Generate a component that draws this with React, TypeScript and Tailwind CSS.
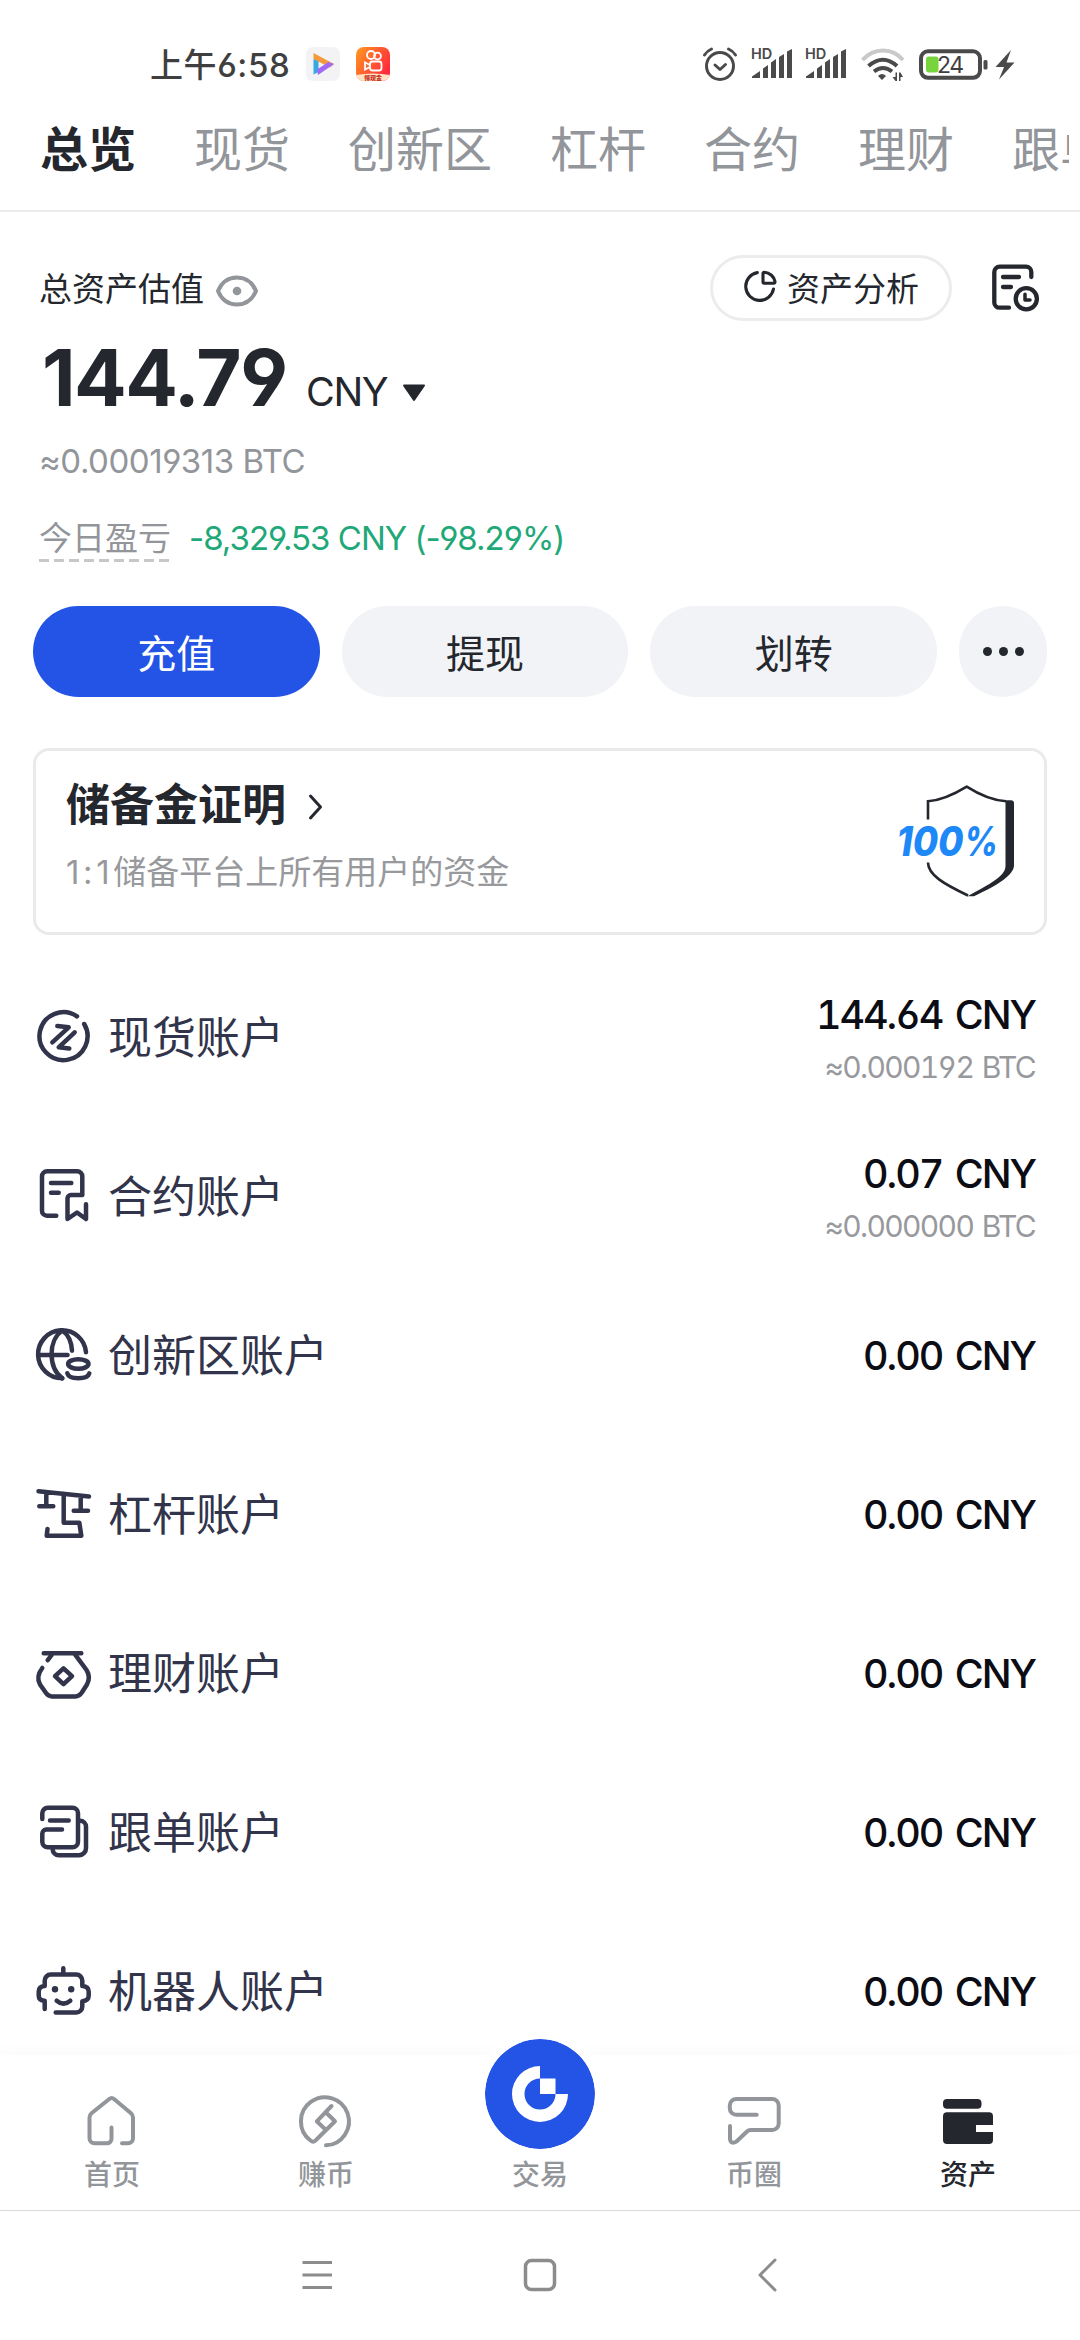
import type { ReactNode } from "react";

const tabs = ["总览", "现货", "创新区", "杠杆", "合约", "理财", "跟单"];

function Stroke({ size = 54, width = 4.5, className = "", children }: { size?: number; width?: number; className?: string; children: ReactNode }) {
  return (
    <svg
      width={size}
      height={size}
      viewBox={`0 0 ${size} ${size}`}
      fill="none"
      stroke="currentColor"
      strokeWidth={width}
      strokeLinecap="round"
      strokeLinejoin="round"
      className={`shrink-0 overflow-visible ${className}`}
    >
      {children}
    </svg>
  );
}

const accounts = [
  {
    name: "现货账户",
    amount: "144.64 CNY",
    btc: "≈0.000192 BTC",
    icon: (
      <>
        <path d="M40 6.3A24 24 0 1 0 47.2 14" />
        <path d="M20.3 16L31.7 17.3L15.3 32.3M37.7 22.3L21.7 37.3L32.3 38.5" />
      </>
    ),
  },
  {
    name: "合约账户",
    amount: "0.07 CNY",
    btc: "≈0.000000 BTC",
    icon: (
      <>
        <path d="M19.3 46.7H10a5 5 0 0 1-5-5V7.3a5 5 0 0 1 5-5h30.3a5 5 0 0 1 5 5V26H34a3.5 3.5 0 0 0-3.5 3.5V50L40 43.5L49 50V35.3" />
        <path d="M14 14H34.3M14 23.7H21.7" />
      </>
    ),
  },
  {
    name: "创新区账户",
    amount: "0.00 CNY",
    icon: (
      <>
        <path d="M49 24.3A24 24 0 1 0 25.3 50.3M1.5 27H30.5" />
        <path d="M25.3 50.3C11 40 11 12 25.3 2.5C31 6.5 34.5 14 35 22.7" />
        <ellipse cx="41.3" cy="36" rx="10.2" ry="4.8" />
        <path d="M30.3 45.3C32 51.8 50.5 51.8 52.3 45.3" />
      </>
    ),
  },
  {
    name: "杠杆账户",
    amount: "0.00 CNY",
    icon: (
      <>
        <path d="M1.5 4.3L52 9.6M9.3 5.5V19.2M2.3 19.2H16.3M43.7 9V23.8M36.7 23.8H51" />
        <path d="M26.7 7V35.7H42.3L44.3 48.7H9.7L10.5 42" />
      </>
    ),
  },
  {
    name: "理财账户",
    amount: "0.00 CNY",
    icon: (
      <>
        <path d="M6.7 7.2H44.3M14.7 9L10.7 14.2" />
        <path d="M5.3 22C0 29 .5 34 3 38.5L9 47Q11.500 50.4 15 50.4H38.5Q42 50.4 44.5 47L50 38.5C53 33 52 28 49.5 24L38 8.3" />
        <path d="M26.5 22.3L35 30.2L26.5 38.2L18 30.2Z" />
      </>
    ),
  },
  {
    name: "跟单账户",
    amount: "0.00 CNY",
    icon: (
      <>
        <path d="M5.3 13.9V8.3a5.5 5.5 0 0 1 5.5-5.5H35.5a5.5 5.5 0 0 1 5.5 5.5V36.7a5.5 5.5 0 0 1-5.5 5.5H10.8a5.5 5.5 0 0 1-5.5-5.5V28.6a4 4 0 0 1 4-4H25" />
        <path d="M13 15.4H31.7M43 15.8a6 6 0 0 1 6 6V43.2a7 7 0 0 1-7 7H21.7a6 6 0 0 1-6-5.5" />
      </>
    ),
  },
  {
    name: "机器人账户",
    amount: "0.00 CNY",
    icon: (
      <>
        <path d="M26.3 4.3V10M7.7 45V36.7C4 36.7 1.7 35 1.7 31.5V27.5C1.7 24 4 22.2 7.7 22V16.6a6 6 0 0 1 6-6H39.3a6 6 0 0 1 6 6V22C49 22.2 51.7 24 51.7 27.5V31.5C51.7 35 49 36.9 45.3 37.2V42.5a6 6 0 0 1-6 6H18.7" />
        <path d="M19.7 36.7Q26.5 42.5 33.3 36.7" />
        <circle cx="18" cy="25.2" r="3.2" fill="currentColor" stroke="none" />
        <circle cx="34.2" cy="25.2" r="3.2" fill="currentColor" stroke="none" />
      </>
    ),
  },
];

function Signal() {
  return (
    <div className="relative h-[34px] w-[42px] shrink-0">
      <span className="absolute -top-0.5 left-0 text-[14.5px] leading-[18px] font-semibold text-[#4a4a4a]">HD</span>
      <svg width="42" height="34" viewBox="0 0 42 34" fill="#4a4a4a">
        <path d="M1 31V29.5L9 24V31ZM12 31V21.5L17 18V31ZM20 31V15.5L25 12V31ZM28 31V10L33 7V31ZM36 31V4.5L41 2V31Z" />
      </svg>
    </div>
  );
}

function StatusBar() {
  return (
    <div className="flex h-32 shrink-0 items-center pl-[150px] text-[#3f3f3f]">
      <span className="w-[156px] pt-0.5 text-[33px] leading-none font-medium tracking-[0.6px] whitespace-nowrap">上午6:58</span>
      <svg width="34" height="34" viewBox="0 0 34 34" className="mr-4">
        <rect width="34" height="34" rx="7" fill="#f3f3f5" />
        <path d="M7.5 12.5V27.5L12.5 25V10Z" fill="#35a8e8" />
        <path d="M7.5 6L28 17L24 20.5L7.5 12Z" fill="#f59a3c" />
        <path d="M28 17L12 28L11 22.5L22.5 15Z" fill="#a268f5" />
      </svg>
      <svg width="34" height="34" viewBox="0 0 34 34" fill="none">
        <defs>
          <linearGradient id="ks" x1="0" y1="0" x2="1" y2="0.6">
            <stop offset="0" stopColor="#ff9a1f" />
            <stop offset="1" stopColor="#ff2a3d" />
          </linearGradient>
          <clipPath id="ksClip"><rect width="34" height="34" rx="8" /></clipPath>
        </defs>
        <g clipPath="url(#ksClip)">
          <rect width="34" height="34" fill="url(#ks)" />
          <path d="M0 28Q17 25 34 28V34H0Z" fill="#ffe3c4" />
          <text x="8" y="33" fontSize="6" fontWeight="900" fill="#c8321e" fontFamily="Noto Sans CJK SC, sans-serif">领现金</text>
        </g>
        <g stroke="#fff" strokeWidth="1.8">
          <circle cx="15" cy="8" r="4" />
          <circle cx="21.5" cy="9" r="3.4" />
          <rect x="14" y="14.5" width="11.5" height="9" rx="2.5" />
          <path d="M14 18L9 15.5V22.5L14 20" />
        </g>
      </svg>
      <div className="ml-[312px] flex items-center">
        <svg width="36" height="36" viewBox="0 0 36 36" fill="none" stroke="#4a4a4a" strokeWidth="3" strokeLinecap="round" strokeLinejoin="round" className="mr-[13px]">
          <circle cx="18" cy="20" r="13.5" />
          <path d="M13 19L18 23.5L23.5 18.5M2.5 9Q5 5 9.5 3M33.5 9Q31 5 26.5 3" />
        </svg>
        <Signal />
        <span className="w-3" />
        <Signal />
        <svg width="44" height="36" viewBox="0 0 44 36" fill="none" stroke="#4a4a4a" strokeWidth="4" className="ml-[14px]">
          <path d="M1.5 14Q10 4.5 22 4.5T42 14" stroke="#c9c9c9" />
          <path d="M7.5 20Q22 7.5 36 20M13 25.5Q22 18.5 31 25.5" />
          <path d="M17 30Q21 26 25 30L21 34Z" fill="#4a4a4a" stroke="none" />
          <path d="M36 26.5V35H34.5L31.5 31H34.5V26.5ZM38 35V26.5H39.5L42 31H39.5V35Z" fill="#4a4a4a" stroke="none" />
        </svg>
        <svg width="98" height="34" viewBox="0 0 98 34" className="ml-[14px]">
          <rect x="2" y="4.3" width="59" height="26.5" rx="7" fill="none" stroke="#4a4a4a" strokeWidth="4" />
          <rect x="7" y="9.500" width="12.5" height="16" rx="3" fill="#78d43c" />
          <text x="18" y="26" fontSize="23" fill="#3f3f3f" fontFamily="Inter, sans-serif" textLength="27">24</text>
          <rect x="64.500" y="13" width="4" height="9.5" rx="1.5" fill="#4a4a4a" />
          <path d="M92 3L76.500 20H85L80 32.5L95.5 15.5H87.5Z" fill="#4a4a4a" />
        </svg>
      </div>
    </div>
  );
}

function TopTabs() {
  return (
    <div className="-mt-2 h-[92px] shrink-0 border-b-2 border-[#ececec] pr-[11px] pl-10">
      <div className="flex h-[60px] items-center gap-[58px] overflow-x-clip text-5xl leading-[60px] whitespace-nowrap text-[#92959a]">
        {tabs.map((t, i) => (
          <span key={t} className={i === 0 ? "font-bold text-[#24272d]" : ""}>{t}</span>
        ))}
      </div>
    </div>
  );
}

function Overview() {
  return (
    <div className="shrink-0 pt-[43px]">
      <div className="flex h-[66px] items-center pr-10 pl-[39px] text-[33px] leading-none text-[#24272d]">
        <span className="pt-[3px]">总资产估值</span>
        <svg width="42" height="32" viewBox="0 0 42 32" fill="none" className="mt-1.5 ml-3">
          <path d="M2 16C6 6.5 13 2.5 21 2.5S36 6.5 40 16C36 25.5 29 29.5 21 29.5S6 25.5 2 16Z" stroke="#92959a" strokeWidth="4" strokeLinejoin="round" />
          <circle cx="21" cy="16" r="4.3" fill="#92959a" />
        </svg>
        <div className="ml-auto flex h-[66px] w-[242px] items-center rounded-full border-3 border-[#ececec] pl-[29px]">
          <Stroke size={36} width={3.1} className="mr-[9px] -mt-0.5">
            <path d="M15.3 3.6A14 14 0 1 0 31.5 20" />
            <path d="M22.500 3.2C27.500 3.400 32.500 8 33 12.500Q33 14.200 31.500 14.300H22.500Q21 14.300 21 12.800V4.700Q21 3.200 22.500 3.200Z" />
          </Stroke>
          <span className="pt-[3px]">资产分析</span>
        </div>
        <Stroke size={48} width={4.3} className="ml-10">
          <path d="M39.3 13V8a5.3 5.3 0 0 0-5.3-5.3H7.6a5.3 5.3 0 0 0-5.3 5.3V38.4a5.3 5.3 0 0 0 5.3 5.3H17" />
          <path d="M11 13H27M11 23H19" />
          <circle cx="34.3" cy="34.7" r="10.6" />
          <path d="M33 30.3V36H38" strokeWidth="3.5" />
        </Stroke>
      </div>

      <div className="mt-[17px] flex h-20 items-baseline pl-[42px] text-[#24272d]">
        <span className="w-[264px] text-[78px] leading-[80px] font-bold tracking-[-0.02em]">144.79</span>
        <span className="text-[39.5px] tracking-[-0.035em]">CNY</span>
        <svg width="24" height="18" viewBox="0 0 24 18" className="ml-[15px] -translate-y-1">
          <path d="M2 1.5H22L12 16Z" fill="#24272d" stroke="#24272d" strokeWidth="2" strokeLinejoin="round" />
        </svg>
      </div>

      <div className="mt-[23px] flex h-10 items-center pl-[39px] text-[33px] leading-none tracking-[-0.014em] text-[#92959a]">≈0.00019313 BTC</div>

      <div className="mt-[35px] flex h-[46px] pl-[39px] text-[33px] leading-[44px]">
        <span className="w-[131px] shrink-0 bg-[repeating-linear-gradient(90deg,#c8c8c8_0_10px,transparent_10px_15px)] bg-[length:100%_3px] bg-bottom bg-no-repeat whitespace-nowrap text-[#92959a]">今日盈亏</span>
        <span className="ml-[19px] tracking-[-0.03em] whitespace-nowrap text-[#1fa878]">-8,329.53 CNY (-98.29%)</span>
      </div>
    </div>
  );
}

function Actions() {
  return (
    <div className="mt-11 flex h-[91px] shrink-0 gap-[22px] px-[33px] text-[39px] leading-none text-[#24272d]">
      <button className="flex-1 rounded-full bg-[#2354e6] pt-[3px] text-white">充值</button>
      <button className="flex-1 rounded-full bg-[#f1f3f6] pt-[3px]">提现</button>
      <button className="flex-1 rounded-full bg-[#f1f3f6] pt-[3px]">划转</button>
      <button className="flex w-[88px] items-center justify-center gap-[7px] rounded-full bg-[#f1f3f6]">
        {[0, 1, 2].map(i => <span key={i} className="size-[9px] rounded-full bg-[#24272d]" />)}
      </button>
    </div>
  );
}

function ReserveCard() {
  return (
    <div className="mx-[33px] mt-[51px] flex h-[187px] shrink-0 rounded-2xl border-3 border-[#e9eaeb] pl-[30px]">
      <div className="flex-1">
        <div className="mt-8 flex h-[44px] items-center text-[44px] leading-none font-bold text-[#24272d]">
          储备金证明
          <Stroke size={20} width={3} className="mt-1 ml-5">
            <path d="M4.5 -1L14.5 10L4.5 21" />
          </Stroke>
        </div>
        <div className="mt-[25px] flex h-10 items-center text-[33px] leading-none text-[#98999c]">
          <span className="tracking-[3.6px]">1:1</span>储备平台上所有用户的资金
        </div>
      </div>
      <svg width="152" height="120" viewBox="0 0 152 120" className="mt-[31px]">
        <path d="M36 37.5V19.3C49 18.5 62 12.5 74.7 4.7C87 12.5 100 18.5 114 19.3M36 80.5C36 93 52 102 76 113.5" fill="none" stroke="#24272d" strokeWidth="2.6" />
        <path d="M113.5 18.3H119.5Q122 18.5 122 21V84C121 93 108 102 82 114.3H75.5C98 102 113.5 94 113.5 84Z" fill="#24272d" />
        <g fontSize="41" fontWeight="800" fontStyle="italic" fontFamily="Inter, sans-serif" fill="#1e88f7">
          <text x="4.500" y="74" textLength="67" lengthAdjust="spacingAndGlyphs">100</text>
          <text x="72" y="74" textLength="34" lengthAdjust="spacingAndGlyphs">%</text>
        </g>
      </svg>
    </div>
  );
}

function AccountList() {
  return (
    <div className="mt-[21px] min-h-0 flex-1 overflow-hidden pr-[45px] pl-[37px]">
      {accounts.map(a => (
        <div key={a.name} className="flex h-[159px] items-center text-[#31344a]">
          <Stroke className="mt-[3px]">{a.icon}</Stroke>
          <span className="ml-[17px] pt-[5px] text-[44px] leading-none">{a.name}</span>
          <div className={`ml-auto text-right text-[39.5px] leading-[52px] font-medium tracking-[-0.052em] text-[#0b0c14] tabular-nums [word-spacing:4px] ${a.btc ? "pt-[11px]" : "pt-1"}`}>
            <div>{a.amount}</div>
            {a.btc && <div className="text-[30px] font-normal tracking-[-0.055em] text-[#98999c] [word-spacing:2px]">{a.btc}</div>}
          </div>
        </div>
      ))}
    </div>
  );
}

function NavItem({ label, active, children }: { label: string; active?: boolean; children: ReactNode }) {
  return (
    <div className={`flex flex-1 flex-col items-center pt-[39px] text-[28px] leading-none font-medium ${active ? "text-[#24272d]" : "text-[#92959a]"}`}>
      {children}
      <span className="mt-[13px]">{label}</span>
    </div>
  );
}

function BottomNav() {
  return (
    <div className="flex h-[155px] shrink-0 bg-white px-[5px] shadow-[0_-4px_14px_rgba(0,0,0,0.025)]">
      <NavItem label="首页">
        <Stroke width={4}>
          <path d="M37 49.3H43a5 5 0 0 0 5-5V23.5Q48 21 46 19.2L29 5Q26.7 3 24.3 5L6.5 19.2Q4.5 21 4.5 23.5V44.3a5 5 0 0 0 5 5H22a4.5 4.5 0 0 0 4.5-4.5V33.5" />
        </Stroke>
      </NavItem>
      <NavItem label="赚币">
        <Stroke width={4}>
          <path d="M27 51.3A24 24 0 1 0 11.5 46.5Q14.5 49 17 46L36 27.3L27 18.5M32.5 12L17.8 27.3L27 36" />
        </Stroke>
      </NavItem>
      <div className="flex flex-1 flex-col items-center text-[28px] leading-none font-medium text-[#92959a]">
        <svg width="110" height="110" viewBox="-55 -55 110 110" className="-mt-4 shrink-0 rounded-full shadow-[0_0_14px_10px_rgba(255,255,255,0.9)]">
          <circle r="55" fill="#2354e6" />
          <path d="M0 -28A28 28 0 1 0 28 0H15.5A15.5 15.5 0 1 1 0 -15.5Z" fill="#fff" />
          <rect y="-15.5" width="15.5" height="15.5" fill="#fff" />
        </svg>
        <span className="mt-3">交易</span>
      </div>
      <NavItem label="币圈">
        <Stroke width={4}>
          <path d="M29.7 20.7H9.3a6.5 6.5 0 0 1-6.5-6.5V11.5a6.5 6.5 0 0 1 6.5-6.5H45.2a6.5 6.5 0 0 1 6.5 6.5V29.5a6.5 6.5 0 0 1-6.5 6.5H23.5Q21.5 36 20 37.5L9.5 47.5Q3.5 51 3 44.5V32" />
        </Stroke>
      </NavItem>
      <NavItem label="资产" active>
        <svg width="54" height="54" viewBox="0 0 54 54" fill="#24272d">
          <rect x="2" y="5" width="38.5" height="9.7" rx="4" />
          <path d="M6 18.3H48a4 4 0 0 1 4 4V31H35V38H52V46a4 4 0 0 1-4 4H6a4 4 0 0 1-4-4V22.3a4 4 0 0 1 4-4Z" />
        </svg>
      </NavItem>
    </div>
  );
}

function SystemNav() {
  return (
    <div className="flex h-[130px] shrink-0 items-center border-t border-[#dadada] pb-0.5 pl-[300px] text-[#8c8c8c]">
      <Stroke size={34} width={3}><path d="M2.500 4.5H32M2.500 17H32M2.500 29.5H32" strokeLinecap="butt" /></Stroke>
      <Stroke size={34} width={3.5} className="ml-[189px]"><rect x="2.5" y="2.5" width="29" height="29" rx="6" /></Stroke>
      <Stroke size={34} width={3} className="ml-[200px]"><path d="M18 2L3 17L18 32" /></Stroke>
    </div>
  );
}

export default function App() {
  return (
    <div className="flex h-[2340px] w-[1080px] flex-col overflow-hidden bg-white font-['Inter','Noto_Sans_CJK_SC',sans-serif] [font-feature-settings:'cv03','cv04']">
      <StatusBar />
      <TopTabs />
      <Overview />
      <Actions />
      <ReserveCard />
      <AccountList />
      <BottomNav />
      <SystemNav />
    </div>
  );
}
